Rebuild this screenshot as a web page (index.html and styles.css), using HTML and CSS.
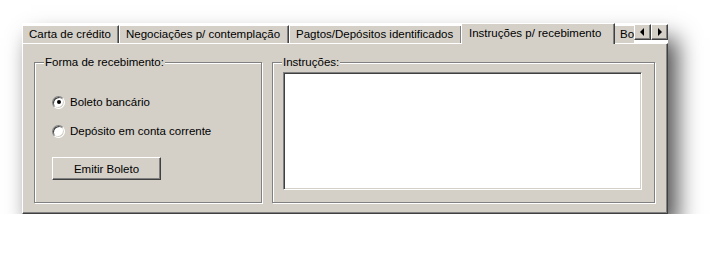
FILE: index.html
```html
<!DOCTYPE html>
<html lang="pt-BR">
<head>
<meta charset="utf-8">
<link rel="stylesheet" href="styles.css">
</head>
<body>
<div class="window">
  <div class="tabstrip">
    <div class="tab first">Carta de crédito</div>
    <div class="tab">Negociações p/ contemplação</div>
    <div class="tab">Pagtos/Depósitos identificados</div>
    <div class="tab selected">Instruções p/ recebimento</div>
    <div class="tab clipped">Bo</div>
    <div class="scroll">
      <span class="sbtn"><span class="tri left"></span></span>
      <span class="sbtn"><span class="tri right"></span></span>
    </div>
  </div>
  <div class="panel">
    <fieldset class="group g1">
      <legend>Forma de recebimento:</legend>
      <div class="group-body">
        <div class="radio-row"><span class="radio checked"></span>Boleto bancário</div>
        <div class="radio-row"><span class="radio"></span>Depósito em conta corrente</div>
        <button class="btn" type="button">Emitir Boleto</button>
      </div>
    </fieldset>
    <fieldset class="group g2">
      <legend>Instruções:</legend>
      <div class="group-body">
        <div class="textarea"></div>
      </div>
    </fieldset>
  </div>
</div>
</body>
</html>
```
FILE: styles.css
```css
html, body {
  margin: 0;
  padding: 0;
  background: #ffffff;
}
body {
  font-family: "Liberation Sans", Arial, sans-serif;
  font-size: 11.5px;
  color: #000;
}
.window {
  margin: 23px 0 0 22px;
  width: 646px;
  box-shadow: 9px 15px 22px rgba(0, 0, 0, 0.7);
  background: #ffffff;
}
.tabstrip {
  display: flex;
  align-items: flex-end;
  height: 20px;
  background: #ffffff;
}
.tab {
  height: 18px;
  margin-top: 2px;
  line-height: 16px;
  padding: 0 5px 0 6px;
  background: #d4d0c8;
  border-top: 1px solid #ffffff;
  border-left: 1px solid #ffffff;
  border-right: 1px solid #404040;
  box-shadow: inset -1px 0 0 #808080;
  box-sizing: border-box;
  white-space: nowrap;
  overflow: hidden;
}
.tab.first { width: 97px; }
.tab:nth-child(2) { width: 170px; }
.tab:nth-child(3) { width: 173px; }
.tab.selected {
  width: 154px;
  height: 21px;
  margin: 0 -1px -1px -1px;
  padding-left: 7px;
  line-height: 18px;
  position: relative;
  z-index: 1;
}
.tab.clipped {
  width: 20px;
  padding: 0 0 0 5px;
  border-right: none;
  box-shadow: none;
}
.scroll {
  display: flex;
  align-self: flex-start;
  margin-top: 1px;
}
.sbtn {
  width: 17px;
  height: 16px;
  box-sizing: border-box;
  background: #d4d0c8;
  border-top: 1px solid #ffffff;
  border-left: 1px solid #ffffff;
  border-right: 1px solid #404040;
  border-bottom: 1px solid #404040;
  box-shadow: inset -1px -1px 0 #808080;
  display: flex;
  align-items: center;
  justify-content: center;
}
.tri {
  width: 0;
  height: 0;
  border-top: 4px solid transparent;
  border-bottom: 4px solid transparent;
}
.tri.left { border-right: 4px solid #000; margin-left: -1px; }
.tri.right { border-left: 4px solid #000; margin-left: 1px; }
.panel {
  display: flex;
  height: 171px;
  box-sizing: border-box;
  background: #d4d0c8;
  border-top: 1px solid #ffffff;
  border-left: 1px solid #ffffff;
  border-right: 1px solid #404040;
  border-bottom: 1px solid #404040;
  box-shadow: inset -1px -1px 0 #808080;
  padding: 12px 0 0 11px;
  gap: 10px;
}
.group {
  margin: 0;
  padding: 0;
  border: 1px solid #808080;
  box-shadow: 1px 1px 0 #ffffff, inset 1px 1px 0 #ffffff;
  box-sizing: border-box;
  height: 147px;
  min-width: 0;
}
.group legend {
  padding: 0 1px;
  margin-left: 9px;
  background: #d4d0c8;
  line-height: 13px;
}
.g1 { width: 228px; }
.g2 { width: 383px; }
.g1 .group-body { padding: 25px 0 0 17px; }
.g2 .group-body { padding: 3px 0 0 10px; }
.radio-row {
  display: flex;
  align-items: center;
  height: 16px;
  margin-bottom: 13px;
  gap: 5px;
}
.radio {
  width: 13px;
  height: 13px;
  border-radius: 50%;
  box-sizing: border-box;
  background: #ffffff;
  border: 1px solid;
  border-color: #808080 #ffffff #ffffff #808080;
  box-shadow: inset 1px 1px 0 #404040, inset -1px -1px 0 #d4d0c8;
  position: relative;
}
.radio.checked::after {
  content: "";
  position: absolute;
  left: 3.5px;
  top: 3.5px;
  width: 4px;
  height: 4px;
  border-radius: 50%;
  background: #000;
}
.btn {
  display: block;
  margin: 18px 0 0 0;
  width: 109px;
  height: 23px;
  font: inherit;
  color: #000;
  background: #d4d0c8;
  border-top: 1px solid #ffffff;
  border-left: 1px solid #ffffff;
  border-right: 1px solid #404040;
  border-bottom: 1px solid #404040;
  box-shadow: inset -1px -1px 0 #808080;
  padding: 0;
}
.textarea {
  width: 359px;
  height: 118px;
  box-sizing: border-box;
  background: #ffffff;
  border-top: 1px solid #808080;
  border-left: 1px solid #808080;
  border-right: 1px solid #ffffff;
  border-bottom: 1px solid #ffffff;
  box-shadow: inset 1px 1px 0 #404040, inset -1px -1px 0 #d4d0c8;
}
```
